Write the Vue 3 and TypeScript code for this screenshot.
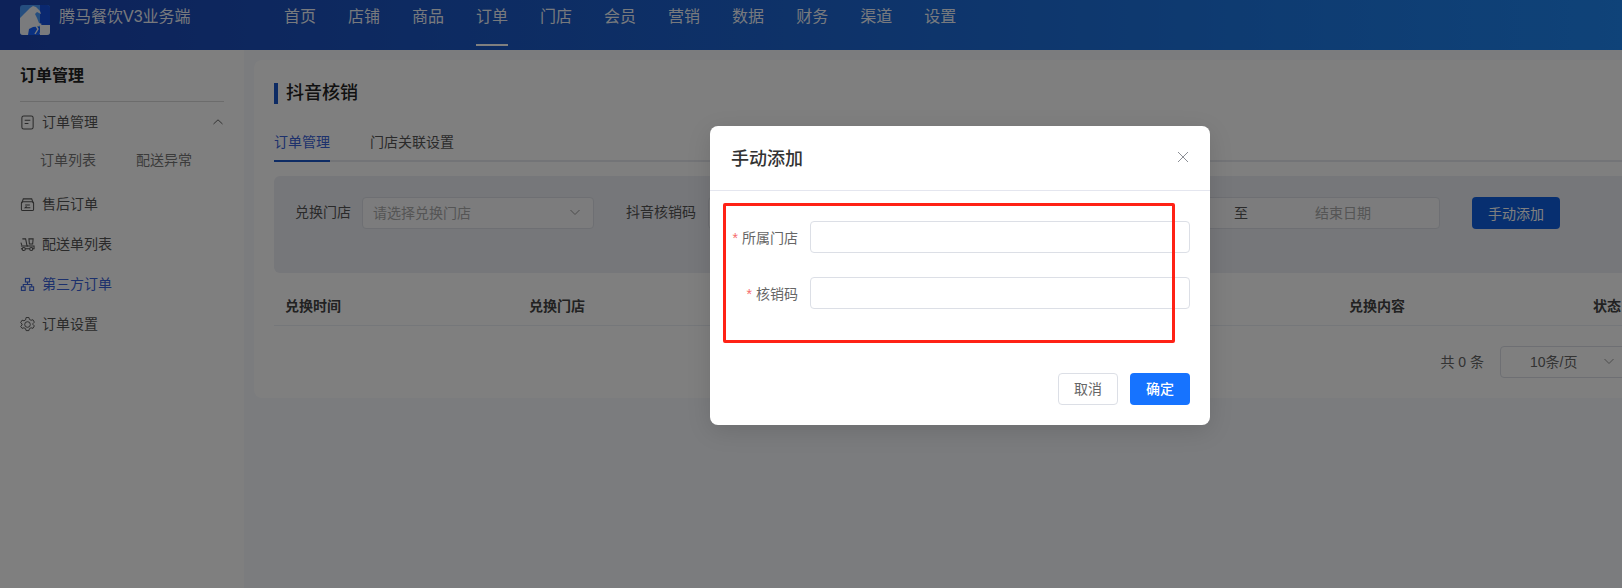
<script setup lang="ts">
const nav: string[] = ['首页', '店铺', '商品', '订单', '门店', '会员', '营销', '数据', '财务', '渠道', '设置']
const columns: string[] = ['兑换时间', '兑换门店', '抖音核销码', '兑换用户', '兑换内容', '状态']
</script>

<template>
  <div class="page">
    <header class="topbar">
      <div class="brand">
        <svg class="logo" viewBox="0 0 30 30" width="30" height="30">
          <defs><clipPath id="logo-clip"><rect width="30" height="30" rx="3" /></clipPath></defs>
          <g clip-path="url(#logo-clip)">
            <rect width="30" height="30" fill="#4a9cff" />
            <rect x="20" width="10" height="20" fill="#1550e0" />
            <rect x="20" y="20" width="10" height="10" fill="#f4f6fb" />
            <rect x="8" y="22" width="12" height="8" fill="#1460ff" />
            <path d="M0 30 V13 L5 8 L10 3 L13 1 L16 2 L20 6 L21 9 L17 7 L15 9 L17 13 L19 18 L22 19 L19 21 L13 22 L9 24 L8 30 Z" fill="#f4f6fb" />
            <path d="M16 21 L18 24 L15 29 M20 19 L22 24 L20 29" fill="none" stroke="#f4f6fb" stroke-width="1.400" />
          </g>
        </svg>
        <span class="brand-name">腾马餐饮V3业务端</span>
      </div>
      <nav class="nav">
        <a v-for="item in nav" :key="item" class="nav-item" :class="{ active: item === '订单' }">{{ item }}</a>
      </nav>
    </header>

    <div class="body">
      <aside class="sidebar">
        <div class="side-title">订单管理</div>
        <div class="menu-item">
          <svg class="ico" viewBox="0 0 16 16" fill="none" stroke="currentColor" stroke-width="1.1">
            <rect x="2" y="1" width="12" height="14" rx="2" />
            <path d="M5 5.500h6M5 9h4" />
          </svg>
          <span>订单管理</span>
          <svg class="chev" viewBox="0 0 12 12" fill="none" stroke="currentColor" stroke-width="1"><path d="M1.500 8 L6 3.800 L10.500 8" /></svg>
        </div>
        <div class="sub-row"><span>订单列表</span><span>配送异常</span></div>
        <div class="menu-item after">
          <svg class="ico" viewBox="0 0 16 16" fill="none" stroke="currentColor" stroke-width="1.1">
            <path d="M2 6.500 L3.500 2h9L14 6.500" />
            <rect x="1.500" y="5" width="13" height="9.500" rx="1.500" />
            <path d="M11 11.500H5.500L7 10M5.500 8.500h5" />
          </svg>
          <span>售后订单</span>
        </div>
        <div class="menu-item">
          <svg class="ico" viewBox="0 0 16 16" fill="none" stroke="currentColor" stroke-width="1.1">
            <path d="M2.500 2h3.500l1.500 7.500h1" />
            <path d="M9.500 2h4.500l-.5 5.500h-3.500zM1 6l1 3" />
            <path d="M1 9.500h14v3h-2M3 12.500H1zM5.500 12.500h5" />
            <circle cx="4" cy="12.800" r="1.700" />
            <circle cx="12" cy="12.800" r="1.700" />
          </svg>
          <span>配送单列表</span>
        </div>
        <div class="menu-item current">
          <svg class="ico" viewBox="0 0 16 16" fill="none" stroke="currentColor" stroke-width="1.200">
            <rect x="5.800" y="1.500" width="4.400" height="3.800" />
            <rect x="1.500" y="10.500" width="4" height="3.800" />
            <rect x="10.500" y="10.500" width="4" height="3.800" />
            <path d="M8 5.300v2.700M3.500 10.500V8h9v2.500" />
          </svg>
          <span>第三方订单</span>
        </div>
        <div class="menu-item">
          <svg class="ico" viewBox="0 0 16 16" fill="none" stroke="currentColor" stroke-width="1">
            <path d="M6.500 1h3l.5 2 1.800 1 2-.6 1.500 2.600-1.500 1.500v1l1.500 1.500-1.500 2.600-2-.6-1.800 1-.5 2h-3l-.5-2-1.800-1-2 .6L.700 10.500 2.200 9V8L.700 6.500 2.200 3.900l2 .6L6 3.500z" transform="translate(0 -.500)" />
            <circle cx="8" cy="8" r="3" />
          </svg>
          <span>订单设置</span>
        </div>
      </aside>

      <main class="main">
        <section class="card">
          <h1 class="page-title">抖音核销</h1>
          <div class="tabs">
            <span class="tab on">订单管理</span>
            <span class="tab">门店关联设置</span>
          </div>
          <div class="filters">
            <label class="f-label first">兑换门店</label>
            <div class="f-select">
              <span>请选择兑换门店</span>
              <svg viewBox="0 0 12 12" width="12" height="12" fill="none" stroke="#999" stroke-width="1"><path d="M1.500 4 L6 8.500 L10.500 4" /></svg>
            </div>
            <label class="f-label second">抖音核销码</label>
            <div class="f-input">请输入核销码</div>
            <label class="f-label third">兑换时间</label>
            <div class="f-range">
              <span class="ph">开始日期</span>
              <span class="to">至</span>
              <span class="ph">结束日期</span>
            </div>
            <button class="btn-add" type="button">手动添加</button>
          </div>
          <div class="thead">
            <span v-for="c in columns" :key="c" class="th">{{ c }}</span>
          </div>
          <div class="pager">
            <span class="total">共 0 条</span>
            <div class="size">
              <span>10条/页</span>
              <svg viewBox="0 0 12 12" width="12" height="12" fill="none" stroke="#999" stroke-width="1"><path d="M1.500 4 L6 8.500 L10.500 4" /></svg>
            </div>
          </div>
        </section>
      </main>
    </div>

    <div class="overlay">
      <div class="modal">
        <div class="modal-head">
          <span class="modal-title">手动添加</span>
          <svg class="close" viewBox="0 0 12 12" width="12" height="12" fill="none" stroke="#8c8f96" stroke-width="1"><path d="M1 1 L11 11 M11 1 L1 11" /></svg>
        </div>
        <div class="modal-body">
          <div class="form-row">
            <label class="form-label"><i>*</i>所属门店</label>
            <div class="form-input"></div>
          </div>
          <div class="form-row">
            <label class="form-label"><i>*</i>核销码</label>
            <div class="form-input"></div>
          </div>
        </div>
        <div class="modal-foot">
          <button class="btn-cancel" type="button">取消</button>
          <button class="btn-ok" type="button">确定</button>
        </div>
        <div class="red-mark"></div>
      </div>
    </div>
  </div>
</template>

<style>
html, body { margin: 0; overflow: hidden; background: #fff; }
</style>

<style scoped>
.page {
  position: relative;
  width: 1622px;
  height: 588px;
  overflow: hidden;
  font-family: "Liberation Sans", "Noto Sans CJK SC", sans-serif;
  font-size: 14px;
  color: #333;
  display: flex;
  flex-direction: column;
}
.topbar {
  height: 50px;
  flex: none;
  display: flex;
  background: linear-gradient(90deg, #1a44b2 0%, #1e86f2 100%);
  color: #fff;
}
.brand {
  width: 284px;
  flex: none;
  box-sizing: border-box;
  padding: 5px 0 0 20px;
  display: flex;
  align-items: flex-start;
}
.logo { display: block; flex: none; }
.brand-name {
  margin-left: 9px;
  font-size: 16px;
  line-height: 24px;
  color: rgba(255, 255, 255, 0.95);
}
.nav { display: flex; gap: 32px; }
.nav-item {
  height: 46px;
  box-sizing: border-box;
  font-size: 16px;
  line-height: 24px;
  padding-top: 5px;
  color: rgba(255, 255, 255, 0.95);
  border-bottom: 2px solid transparent;
}
.nav-item.active { border-bottom-color: #fff; }
.body { flex: 1; display: flex; min-height: 0; background: #f6f8fc; }
.sidebar {
  width: 244px;
  flex: none;
  box-sizing: border-box;
  background: #fff;
  padding: 15px 20px 0;
}
.side-title {
  font-size: 16px;
  font-weight: 700;
  line-height: 22px;
  color: #222;
  padding-bottom: 14px;
  border-bottom: 1px solid #d8d8d8;
}
.menu-item {
  height: 40px;
  display: flex;
  align-items: center;
  color: #555;
}
.menu-item span { padding-bottom: 2px; }
.menu-item .ico { width: 15px; height: 15px; margin-right: 7px; flex: none; }
.menu-item.after { margin-top: 6px; }
.menu-item.current { color: #3a62d8; }
.chev { width: 12px; height: 12px; margin-left: auto; margin-right: 0; color: #666; }
.sub-row {
  height: 36px;
  box-sizing: border-box;
  padding: 0 0 2px 20px;
  display: flex;
  align-items: center;
  gap: 40px;
  color: #777;
}
.main { flex: 1; min-width: 0; padding: 10px 0 0 10px; overflow: hidden; }
.card {
  width: 1400px;
  box-sizing: border-box;
  background: #fff;
  border-radius: 8px;
  padding: 23px 20px 20px;
}
.page-title {
  margin: 0;
  height: 21px;
  line-height: 21px;
  font-size: 18px;
  font-weight: 500;
  color: #222;
  padding-left: 8px;
  border-left: 4px solid #1a56c8;
}
.tabs {
  margin-top: 20px;
  display: flex;
  gap: 40px;
  border-bottom: 2px solid #e6e8ee;
  height: 36px;
}
.tab {
  height: 38px;
  box-sizing: border-box;
  padding-top: 8px;
  line-height: 20px;
  color: #555;
}
.tab.on { color: #3a62d8; border-bottom: 2px solid #1a56c8; }
.filters {
  margin-top: 14px;
  height: 97px;
  box-sizing: border-box;
  padding: 21px 21px 0;
  background: #eceef4;
  border-radius: 6px;
  display: flex;
  align-items: flex-start;
}
.f-label { line-height: 30px; color: #555; margin-right: 12px; flex: none; }
.f-label.first { margin-right: 11px; }
.f-label.second { margin-left: 32px; }
.f-label.third { margin-left: 25px; }
.f-select, .f-input, .f-range {
  height: 32px;
  box-sizing: border-box;
  border: 1px solid #dcdfe6;
  border-radius: 4px;
  background: #f8f9fb;
  display: flex;
  align-items: center;
  padding-bottom: 2px;
  color: #aaa;
  flex: none;
}
.f-select { width: 232px; padding-left: 10px; padding-right: 12px; justify-content: space-between; }
.f-input { width: 196px; padding-left: 10px; padding-right: 10px; }
.f-range { width: 443px; padding-left: 68px; }
.f-range .to { color: #555; margin: 0 67px 0 112px; }
.btn-add {
  margin-left: 32px;
  width: 88px;
  height: 32px;
  flex: none;
  border: 0;
  border-radius: 4px;
  background: #0f5fe0;
  color: #fff;
  font: inherit;
}
.thead {
  margin-top: 15px;
  height: 38px;
  box-sizing: border-box;
  border-bottom: 1px solid #ebeef5;
  display: grid;
  grid-template-columns: 244px 273px 273px 274px 244px 1fr;
  padding: 0 0 4px 11px;
  align-items: center;
}
.th { font-weight: 700; color: #444; }
.pager {
  margin-top: 20px;
  display: flex;
  align-items: center;
  justify-content: flex-end;
  gap: 16px;
  height: 32px;
  color: #666;
}
.total { padding-bottom: 2px; }
.size {
  width: 134px;
  height: 32px;
  box-sizing: border-box;
  border: 1px solid #dcdfe6;
  border-radius: 4px;
  padding: 0 18px 2px 29px;
  display: flex;
  align-items: center;
  justify-content: space-between;
}
.overlay {
  position: absolute;
  inset: 0;
  background: rgba(0, 0, 0, 0.5);
  box-sizing: border-box;
  padding: 126px 0 0 710px;
}
.modal {
  position: relative;
  width: 500px;
  height: 299px;
  box-sizing: border-box;
  background: #fff;
  border-radius: 8px;
  box-shadow: 0 6px 24px rgba(0, 0, 0, 0.12);
}
.modal-head {
  height: 65px;
  box-sizing: border-box;
  border-bottom: 1px solid #e4e6ef;
  padding: 0 21px 2px;
  display: flex;
  align-items: center;
  justify-content: space-between;
}
.modal-title { font-size: 18px; font-weight: 500; color: #333; }
.close { display: block; margin-right: 0; }
.modal-body { padding: 30px 20px 0 20px; display: flex; flex-direction: column; gap: 24px; }
.form-row { display: flex; align-items: center; height: 32px; }
.form-label { width: 68px; margin-right: 12px; padding-bottom: 1px; text-align: right; color: #666; flex: none; }
.form-label i { font-style: normal; color: #f56c6c; margin-right: 4px; }
.form-input {
  flex: 1;
  height: 32px;
  box-sizing: border-box;
  border: 1px solid #dcdfe6;
  border-radius: 4px;
  background: #fff;
}
.modal-foot {
  margin-top: 64px;
  padding: 0 20px;
  display: flex;
  justify-content: flex-end;
  gap: 12px;
}
.btn-cancel, .btn-ok {
  width: 60px;
  height: 32px;
  border-radius: 4px;
  font: inherit;
  padding: 0 0 2px;
}
.btn-cancel { background: #fff; border: 1px solid #dcdfe6; color: #666; }
.btn-ok { background: #1673ff; border: 0; color: #fff; font-weight: 500; }
.red-mark {
  position: absolute;
  left: 13px;
  top: 77px;
  width: 452px;
  height: 140px;
  box-sizing: border-box;
  border: 3px solid #ff2216;
  border-radius: 2px;
  pointer-events: none;
}
</style>
